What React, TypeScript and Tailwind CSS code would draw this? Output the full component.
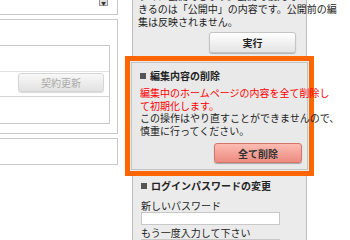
import React from "react";

const jp = "font-['Noto_Sans_CJK_JP',sans-serif] font-features-['palt'] whitespace-nowrap";

function Heading({ children }: { children: React.ReactNode }) {
    return (
        <div className="flex items-center gap-[4px] h-[13px] font-bold text-[10px] text-[#222]">
            <span className="w-[6px] h-[6px] bg-[#555] shrink-0" />
            <span>{children}</span>
        </div>
    );
}

export default function App() {
    return (
        <div className={`w-[350px] h-[240px] overflow-hidden bg-white flex ${jp}`}>
            {/* left column */}
            <div className="w-[118px] shrink-0 flex flex-col">
                <div className="h-[15px] shrink-0 border-b border-r border-[#c8c8c8] flex justify-end items-start pr-[9px]">
                    <div className="w-[9px] h-[6px] bg-[#e0e0e0] border-x border-b border-[#999] flex items-start justify-center">
                        <span className="text-[5px] leading-[5px] text-[#333]">▼</span>
                    </div>
                </div>
                <div className="mt-[4px] h-[115px] shrink-0 border-y border-r border-[#c8c8c8] pt-[25px]">
                    <div className="w-[110px] h-[79px] border-y border-r border-[#c8c8c8] flex flex-col">
                        <div className="h-[26px] border-b border-[#e2e2e2]" />
                        <div className="h-[25px] border-b border-[#d4d4d4] flex items-start justify-end pr-[5px] pt-[1px]">
                            <button className="w-[86px] h-[19px] rounded-[3px] border border-[#d6d6d6] bg-gradient-to-b from-[#f8f8f8] to-[#e2e2e2] shadow-[0_1px_1px_rgba(0,0,0,0.15)] text-[10px] text-[#aaa]">
                                契約更新
                            </button>
                        </div>
                        <div className="flex-1" />
                    </div>
                </div>
                <div className="mt-[4px] h-[27px] shrink-0 border-y border-r border-[#c8c8c8]" />
            </div>

            {/* right sidebar */}
            <div className="ml-[7px] w-[189px] shrink-0 flex flex-col">
                <div className="mx-[7px] h-[56px] shrink-0 bg-[#ebebeb] border-x border-[#bdbdbd] px-[5px] pb-[3px] flex flex-col justify-end">
                    <div className="text-[10px] leading-[13px] text-[#222]">
                        <p>すぐに公開できます。公開で復元で</p>
                        <p>きるのは「公開中」の内容です。公開前の編</p>
                        <p>集は反映されません。</p>
                    </div>
                    <div className="flex justify-end mt-[4px] pr-[5px]">
                        <button className="w-[87px] h-[21px] rounded-[3px] border border-[#c4c4c4] bg-gradient-to-b from-white to-[#e4e4e4] shadow-[0_1px_1px_rgba(0,0,0,0.25)] text-[10px] font-bold text-[#222]">
                            実行
                        </button>
                    </div>
                </div>

                <div className="h-[120px] shrink-0 border-[5px] border-[#ff6600] bg-[#ebebeb] p-[1px]">
                    <div className="h-full border border-[#c4c4c4] bg-[#e9e9e9] pl-[8px] pr-[5px] pt-[6px]">
                        <Heading>編集内容の削除</Heading>
                        <div className="mt-[5px] text-[10px] leading-[12.5px] text-[#ff0000]">
                            <p>編集中のホームページの内容を全て削除し</p>
                            <p>て初期化します。</p>
                        </div>
                        <div className="text-[10px] leading-[12.5px] text-[#222]">
                            <p>この操作はやり直すことができませんので、</p>
                            <p>慎重に行ってください。</p>
                        </div>
                        <div className="flex justify-end mt-[6px]">
                            <button className="w-[88px] h-[20px] rounded-[3px] border border-[#d2766c] bg-gradient-to-b from-[#fbbcb2] to-[#ee8a80] shadow-[0_1px_1px_rgba(0,0,0,0.3)] text-[10px] font-bold text-[#333]">
                                全て削除
                            </button>
                        </div>
                    </div>
                </div>

                <div className="mx-[7px] flex-1 bg-[#ebebeb] border-x border-[#bdbdbd] pl-[8px] pt-[3px]">
                    <Heading>ログインパスワードの変更</Heading>
                    <p className="mt-[7px] text-[10px] leading-[13px] text-[#222]">新しいパスワード</p>
                    <div className="w-[139px] h-[13px] bg-white border border-[#c8c8c8]" />
                    <p className="mt-[1px] text-[10px] leading-[13px] text-[#222]">もう一度入力して下さい</p>
                    <div className="w-[139px] h-[13px] bg-white border border-[#c8c8c8]" />
                </div>
            </div>
        </div>
    );
}
